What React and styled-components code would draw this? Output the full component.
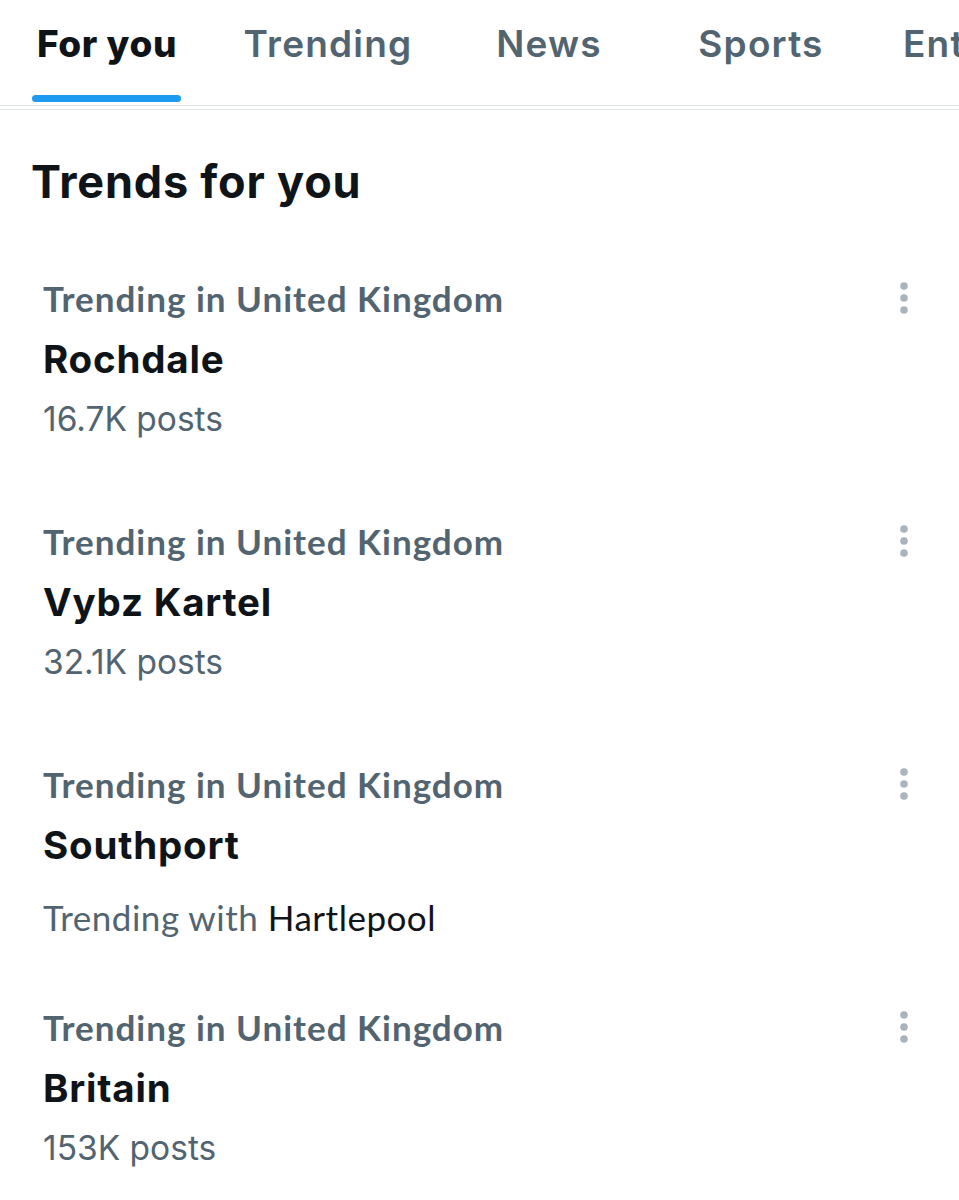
import React from 'react';
import styled, { createGlobalStyle } from 'styled-components';

const GlobalStyle = createGlobalStyle`
  html, body {
    margin: 0;
    padding: 0;
    background: #ffffff;
  }
  body {
    font-family: Inter, "Open Sans", sans-serif;
    color: #0f1419;
    overflow: hidden;
  }
`;

const Page = styled.div`
  width: 959px;
  height: 1200px;
  overflow: hidden;
  background: #fff;
`;

const TabBar = styled.nav`
  display: flex;
  height: 105px;
  border-bottom: 1px solid #dfe3e6;
  white-space: nowrap;
  overflow: hidden;
`;

const Tab = styled.div`
  position: relative;
  flex: 0 0 auto;
  width: ${(p) => p.$w}px;
  display: flex;
  justify-content: ${(p) => (p.$start ? 'flex-start' : 'center')};
  padding-left: ${(p) => (p.$start ? '37px' : '0')};
  box-sizing: border-box;
  padding-top: 21px;
  font-family: Inter, "Open Sans", sans-serif;
  font-size: 37px;
  font-weight: ${(p) => (p.$active ? 800 : 600)};
  letter-spacing: ${(p) => (p.$active ? '0.6px' : '1.2px')};
  color: ${(p) => (p.$active ? '#0f1419' : '#536471')};
  line-height: 46px;
`;

const Indicator = styled.span`
  position: absolute;
  left: 32px;
  right: 33px;
  bottom: 3px;
  height: 7px;
  border-radius: 4px;
  background: #1d9bf0;
`;

const SecondLine = styled.div`
  height: 3px;
  border-bottom: 1px solid #e6e9eb;
`;

const Heading = styled.h2`
  margin: 0;
  padding: 42px 0 0 31px;
  font-family: Inter, "Open Sans", sans-serif;
  font-size: 45px;
  font-weight: 700;
  letter-spacing: 0.8px;
  line-height: 60px;
  color: #0f1419;
`;

const List = styled.div`
  display: flex;
  flex-direction: column;
  padding-top: 66px;
`;

const Item = styled.div`
  display: flex;
  justify-content: space-between;
  padding: 0 40px 0 43px;
  height: 243px;
`;

const Body = styled.div`
  display: flex;
  flex-direction: column;
`;

const Label = styled.div`
  font-family: Lato, "Open Sans", sans-serif;
  font-size: 35px;
  font-weight: 700;
  letter-spacing: 1px;
  color: #536471;
  line-height: 40px;
`;

const Title = styled.div`
  margin-top: 21px;
  font-family: Inter, "Open Sans", sans-serif;
  font-size: 38.5px;
  font-weight: 700;
  letter-spacing: 0.8px;
  color: #0f1419;
  line-height: 40px;
`;

const Meta = styled.div`
  margin-top: ${(p) => (p.$extra ? 32 : 20)}px;
  font-family: ${(p) => (p.$lato ? 'Lato, "Open Sans", sans-serif' : 'Inter, "Open Sans", sans-serif')};
  font-size: ${(p) => (p.$lato ? '35px' : '33.5px')};
  letter-spacing: ${(p) => (p.$lato ? '0.5px' : '0')};
  font-weight: 400;
  color: #536471;
  line-height: 40px;
`;

const Strong = styled.span`
  color: #0f1419;
`;

const MoreButton = styled.div`
  width: 30px;
  padding-top: 2px;
  display: flex;
  justify-content: center;
`;

function Dots() {
  return (
    <svg width="12" height="36" viewBox="0 0 12 36">
      <circle cx="6" cy="6" r="3.8" fill="#a9b4bd" />
      <circle cx="6" cy="18" r="3.8" fill="#a9b4bd" />
      <circle cx="6" cy="30" r="3.8" fill="#a9b4bd" />
    </svg>
  );
}

const tabs = [
  { label: 'For you', w: 214, active: true },
  { label: 'Trending', w: 228 },
  { label: 'News', w: 214 },
  { label: 'Sports', w: 210 },
  { label: 'Entertainment', w: 400, start: true },
];

const trends = [
  { name: 'Rochdale', meta: '16.7K posts' },
  { name: 'Vybz Kartel', meta: '32.1K posts' },
  { name: 'Southport', with: 'Hartlepool' },
  { name: 'Britain', meta: '153K posts' },
];

export default function App() {
  return (
    <Page>
      <GlobalStyle />
      <TabBar>
        {tabs.map((t) => (
          <Tab key={t.label} $w={t.w} $active={t.active} $start={t.start}>
            {t.label}
            {t.active && <Indicator />}
          </Tab>
        ))}
      </TabBar>
      <SecondLine />
      <Heading>Trends for you</Heading>
      <List>
        {trends.map((t) => (
          <Item key={t.name}>
            <Body>
              <Label>Trending in United Kingdom</Label>
              <Title>{t.name}</Title>
              {t.with ? (
                <Meta $extra $lato>
                  Trending with <Strong>{t.with}</Strong>
                </Meta>
              ) : (
                <Meta>{t.meta}</Meta>
              )}
            </Body>
            <MoreButton>
              <Dots />
            </MoreButton>
          </Item>
        ))}
      </List>
    </Page>
  );
}
